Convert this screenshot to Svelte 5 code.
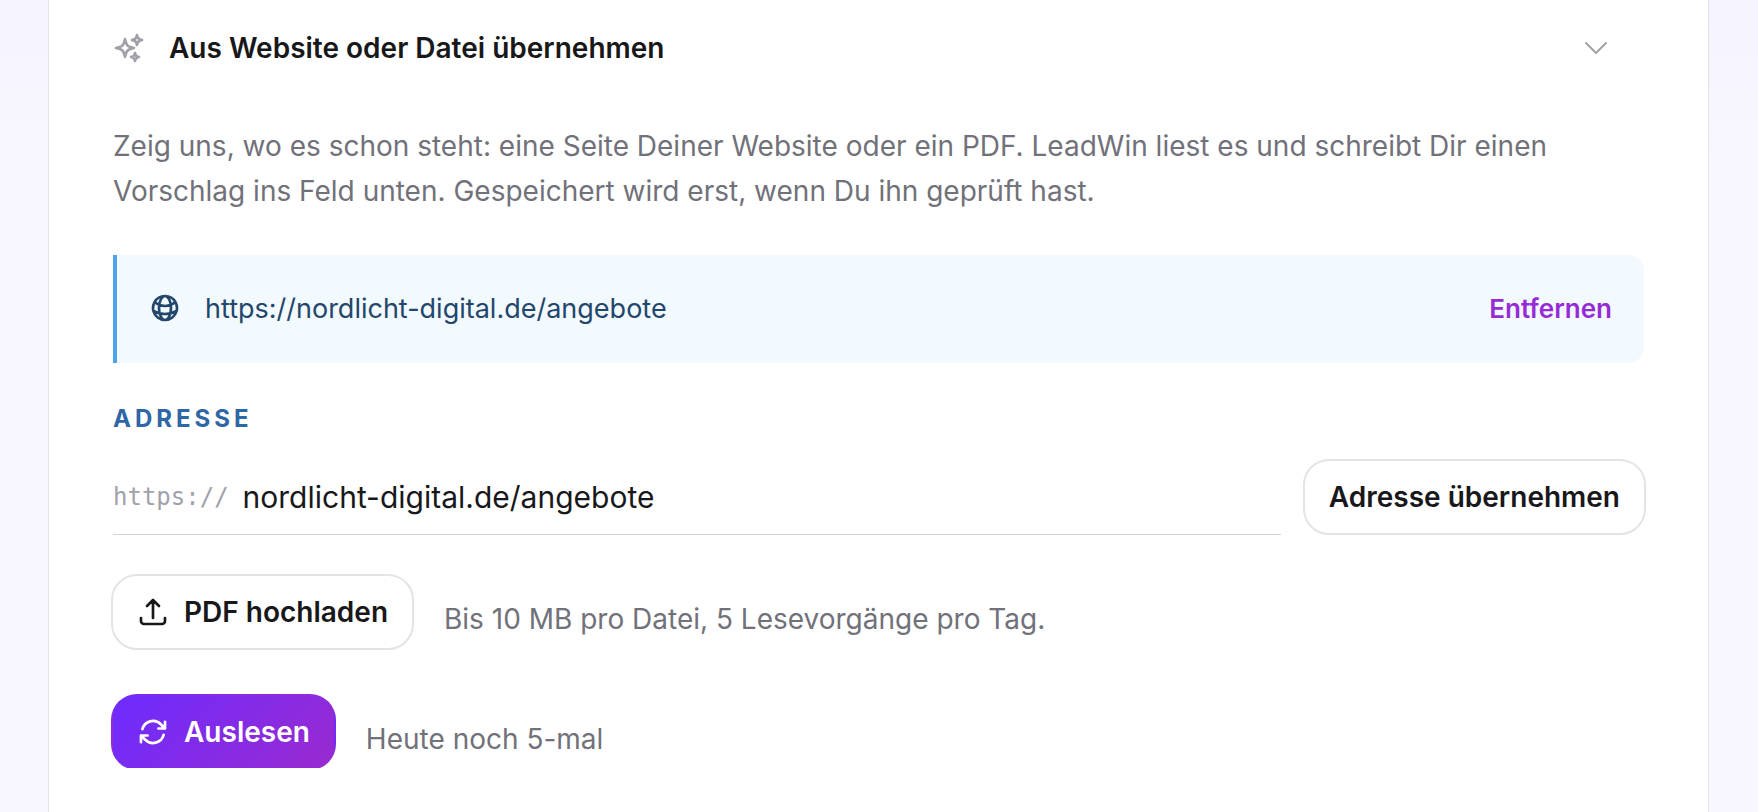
<script>
  let open = true;
  let address = 'nordlicht-digital.de/angebote';
  let source = 'https://nordlicht-digital.de/angebote';
  let remaining = 5;

  function applyAddress() {
    const value = address.trim();
    source = value ? `https://${value}` : '';
  }

  function removeSource() {
    source = '';
  }
</script>

<main class="page">
  <section class="card">
    <button
      class="toggle"
      aria-expanded={open}
      aria-controls="import-panel"
      on:click={() => (open = !open)}
    >
      <svg class="icon muted" viewBox="0 0 24 24" aria-hidden="true">
        <path
          d="M9.813 15.904 9 18.75l-.813-2.846a4.5 4.5 0 0 0-3.09-3.09L2.25 12l2.846-.813a4.5 4.5 0 0 0 3.09-3.09L9 5.25l.813 2.846a4.5 4.5 0 0 0 3.09 3.09L15.75 12l-2.846.813a4.5 4.5 0 0 0-3.09 3.09ZM18.259 8.715 18 9.75l-.259-1.035a3.375 3.375 0 0 0-2.455-2.456L14.25 6l1.036-.259a3.375 3.375 0 0 0 2.455-2.456L18 2.25l.259 1.035a3.375 3.375 0 0 0 2.456 2.456L21.75 6l-1.035.259a3.375 3.375 0 0 0-2.456 2.456ZM16.894 20.567 16.5 21.75l-.394-1.183a2.25 2.25 0 0 0-1.423-1.423L13.5 18.75l1.183-.394a2.25 2.25 0 0 0 1.423-1.423l.394-1.183.394 1.183a2.25 2.25 0 0 0 1.423 1.423l1.183.394-1.183.394a2.25 2.25 0 0 0-1.423 1.423Z"
        />
      </svg>
      <span class="title">Aus Website oder Datei übernehmen</span>
      <svg class="icon thin muted" viewBox="0 0 24 24" aria-hidden="true">
        <path d="m19.5 8.25-7.5 7.5-7.5-7.5" />
      </svg>
    </button>

    {#if open}
      <div class="panel" id="import-panel">
        <p class="intro">
          Zeig uns, wo es schon steht: eine Seite Deiner Website oder ein PDF. LeadWin liest es und
          schreibt Dir einen Vorschlag ins Feld unten. Gespeichert wird erst, wenn Du ihn geprüft hast.
        </p>

        {#if source}
          <div class="source">
            <svg class="icon" viewBox="0 0 24 24" aria-hidden="true">
              <path
                d="M12 21a9.004 9.004 0 0 0 8.716-6.747M12 21a9.004 9.004 0 0 1-8.716-6.747M12 21c2.485 0 4.5-4.03 4.5-9S14.485 3 12 3m0 18c-2.485 0-4.5-4.03-4.5-9S9.515 3 12 3m0 0a8.997 8.997 0 0 1 7.843 4.582M12 3a8.997 8.997 0 0 0-7.843 4.582m15.686 0A11.953 11.953 0 0 1 12 10.5c-2.998 0-5.74-1.1-7.843-2.918m15.686 0A8.959 8.959 0 0 1 21 12c0 .778-.099 1.533-.284 2.253m0 0A17.919 17.919 0 0 1 12 16.5c-3.162 0-6.133-.815-8.716-2.247m0 0A9.015 9.015 0 0 1 3 12c0-1.605.42-3.113 1.157-4.418"
              />
            </svg>
            <span class="source-url">{source}</span>
            <button class="remove" on:click={removeSource}>Entfernen</button>
          </div>
        {/if}

        <label class="label" for="address">Adresse</label>
        <div class="address-row">
          <div class="field">
            <span class="prefix">https://</span>
            <input id="address" type="text" spellcheck="false" bind:value={address} />
          </div>
          <button class="btn" on:click={applyAddress}>Adresse übernehmen</button>
        </div>

        <div class="action-row">
          <button class="btn">
            <svg class="icon" viewBox="0 0 24 24" aria-hidden="true">
              <path
                d="M3 16.5v2.25A2.25 2.25 0 0 0 5.25 21h13.5A2.25 2.25 0 0 0 21 18.75V16.5m-13.5-9L12 3m0 0 4.5 4.5M12 3v13.5"
              />
            </svg>
            PDF hochladen
          </button>
          <span class="hint">Bis 10 MB pro Datei, 5 Lesevorgänge pro Tag.</span>
        </div>

        <div class="action-row last">
          <button class="btn btn-primary">
            <svg class="icon" viewBox="0 0 24 24" aria-hidden="true">
              <path
                d="M16.023 9.348h4.992v-.001M2.985 19.644v-4.992m0 0h4.992m-4.993 0 3.181 3.183a8.25 8.25 0 0 0 13.803-3.7M4.031 9.865a8.25 8.25 0 0 1 13.803-3.7l3.181 3.182m0-4.991v4.99"
              />
            </svg>
            Auslesen
          </button>
          <span class="hint">Heute noch {remaining}-mal</span>
        </div>
      </div>
    {/if}
  </section>
</main>

<style>
  :global(body) {
    background: #f8f7ff;
  }

  .page {
    display: flex;
    box-sizing: border-box;
    min-height: 100vh;
    padding: 0 49px 0 48px;
    background: linear-gradient(180deg, #f5f3ff 0, #f8f7ff 160px);
    color: #18181b;
    font-family: Inter, 'Liberation Sans', sans-serif;
    font-size: 28px;
  }

  .card {
    flex: 1;
    min-width: 0;
    padding: 0 64px 44px;
    background: #fff;
    border: solid #e4e4e7;
    border-width: 0 1px;
  }

  button {
    font: inherit;
    color: inherit;
    cursor: pointer;
  }

  .icon {
    flex: none;
    width: 32px;
    height: 32px;
    fill: none;
    stroke: currentColor;
    stroke-width: 2;
    stroke-linecap: round;
    stroke-linejoin: round;
  }

  .icon.thin {
    stroke-width: 1.5;
  }

  .icon.muted {
    color: #a1a1aa;
  }

  .toggle {
    display: flex;
    align-items: center;
    gap: 24px;
    width: 100%;
    min-height: 95px;
    padding: 0 32px 0 0;
    border: 0;
    background: none;
    text-align: left;
  }

  .title {
    flex: 1;
    font-weight: 600;
  }

  .panel {
    margin: 0 -2px;
    padding: 29px 2px 0;
    overflow: hidden;
  }

  .intro {
    margin: 0 0 41px;
    color: #71717a;
    line-height: 45px;
  }

  .source {
    display: flex;
    align-items: center;
    gap: 24px;
    min-height: 108px;
    box-sizing: border-box;
    padding: 24px 32px 26px;
    border-left: 4px solid #4da3e8;
    border-radius: 0 16px 16px 0;
    background: #f2f9ff;
    color: #23466b;
    font-size: 27px;
  }

  .source-url {
    flex: 1;
    min-width: 0;
    overflow-wrap: anywhere;
  }

  .remove {
    padding: 0;
    border: 0;
    background: none;
    color: #962bd6;
    font-size: 26px;
    font-weight: 600;
  }

  .label {
    display: block;
    margin: 40px 0 24px;
    color: #2f66a6;
    font-size: 24px;
    font-weight: 700;
    line-height: 32px;
    letter-spacing: 4px;
    text-transform: uppercase;
  }

  .address-row {
    display: flex;
    align-items: stretch;
    gap: 22px;
    margin-right: -2px;
  }

  .field {
    display: flex;
    flex: 1;
    align-items: center;
    gap: 14px;
    min-width: 0;
    border-bottom: 1px solid #d4d4d8;
  }

  .prefix {
    color: #a1a1aa;
    font-family: 'DejaVu Sans Mono', monospace;
    font-size: 24px;
  }

  input {
    flex: 1;
    min-width: 0;
    padding: 0;
    border: 0;
    outline: 0;
    background: none;
    color: inherit;
    font: inherit;
    font-size: 30px;
  }

  .btn {
    display: inline-flex;
    flex: none;
    align-items: center;
    justify-content: center;
    gap: 15px;
    box-sizing: border-box;
    height: 76px;
    padding: 0 24px;
    border: 2px solid #e4e4e7;
    border-radius: 26px;
    background: #fff;
    font-weight: 600;
  }

  .btn-primary {
    border-color: transparent;
    background: linear-gradient(135deg, #6d2cff, #9a2acf);
    color: #fff;
  }

  .action-row {
    display: flex;
    align-items: flex-end;
    gap: 30px;
    margin: 39px -2px 0;
  }

  /* the panel trims the lower border of the last button */
  .action-row.last {
    margin: 44px -2px -2px;
  }

  .hint {
    padding-bottom: 8px;
    color: #71717a;
    line-height: 45px;
  }
</style>
